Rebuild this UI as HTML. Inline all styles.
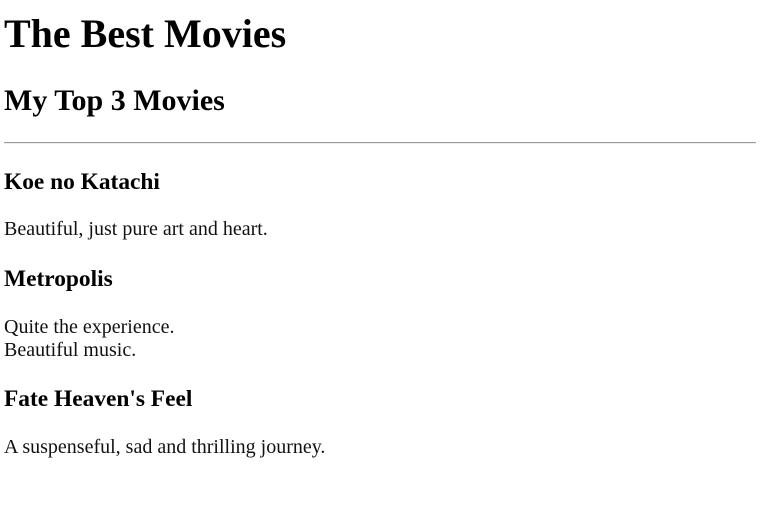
<!DOCTYPE html>
<html><head><meta charset="utf-8"><style>
html,body{margin:0;padding:0;background:#fff;width:765px;height:525px;overflow:hidden}
body{font-family:"Liberation Serif",serif;color:#000;position:relative}
.a{position:absolute;left:4px;margin:0;white-space:nowrap;line-height:normal}
h1.a{font-size:40px;font-weight:bold}
h2.a{font-size:30px;font-weight:bold}
h3.a{font-size:23.4px;font-weight:bold}
p.a{font-size:20px;color:#111}
.hr{position:absolute;left:4px;width:752px;top:142px;height:0;border-top:1px solid #9a9a9a;border-bottom:1px solid #eee}
</style></head><body>
<h1 class="a" style="top:10px">The Best Movies</h1>
<h2 class="a" style="top:84px">My Top 3 Movies</h2>
<div class="hr"></div>
<h3 class="a" style="top:168.8px">Koe no Katachi</h3>
<p class="a" style="top:218.3px">Beautiful, just pure art and heart.</p>
<h3 class="a" style="top:266px">Metropolis</h3>
<p class="a" style="top:315.5px">Quite the experience.<br>Beautiful music.</p>
<h3 class="a" style="top:386px">Fate Heaven's Feel</h3>
<p class="a" style="top:436.3px">A suspenseful, sad and thrilling journey.</p>
</body></html>
